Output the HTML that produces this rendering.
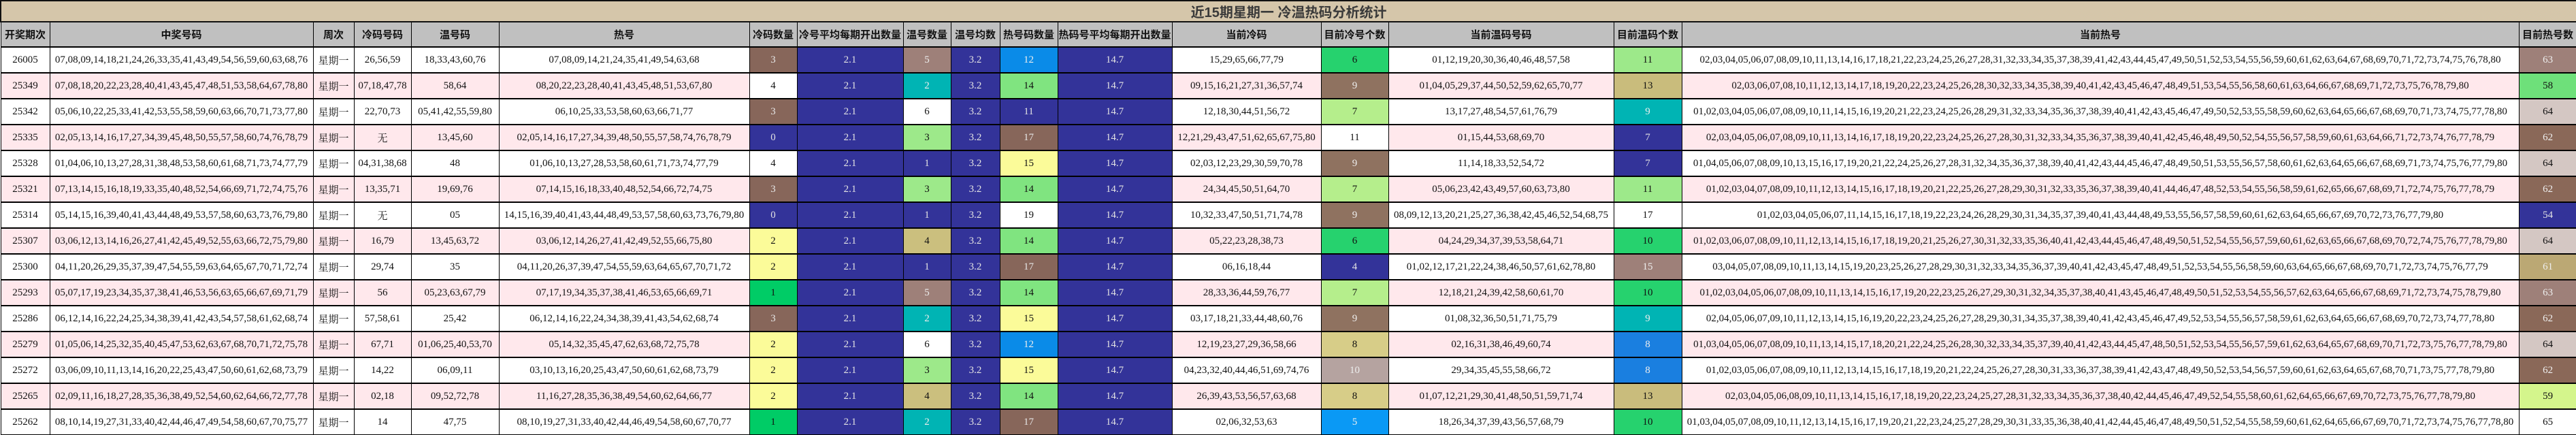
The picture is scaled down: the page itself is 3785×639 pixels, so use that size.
<!DOCTYPE html>
<html><head><meta charset="utf-8">
<style>
html,body{margin:0;padding:0;background:#fff;}
body{width:3785px;height:620px;overflow:hidden;}
table{border-collapse:collapse;table-layout:fixed;width:3785px;font-family:"Liberation Serif","Noto Serif CJK SC","Noto Sans CJK SC",serif;font-size:15px;color:#111;}
td,th{border:1px solid #000;text-align:center;padding:0;white-space:nowrap;overflow:hidden;}
tr.t td{height:26px;background:#d5c6aa;border:2px solid #111;font-family:"Liberation Sans","Noto Sans CJK SC",sans-serif;font-weight:bold;font-size:20px;color:#3a3a3a;}
tr.h th{height:35px;background:#c0c0c0;font-family:"Liberation Sans","Noto Sans CJK SC",sans-serif;font-weight:bold;font-size:15px;color:#111;}
tr.r td{height:36px;border-top:2px solid #000;}
tr.o td{background:#fff;}
tr.e td{background:#ffe8ec;}
tr td.nv{background:#333399;color:#e4e4e4;}
tr td.br{background:#87665a;color:#e6e6e6;}
tr td.gb{background:#9e8079;color:#eee;}
tr td.tl{background:#00b4b4;color:#eee;}
tr td.lg{background:#9de98a;}
tr td.kh{background:#cbbf7e;}
tr td.yl{background:#fbfb99;}
tr td.gr{background:#00cc66;}
tr td.bl{background:#0a8be8;color:#eee;}
tr td.g2{background:#80e480;}
tr td.g3{background:#26d26e;}
tr td.mb{background:#8f7260;color:#eee;}
tr td.l2{background:#b5ee8c;}
tr td.tn{background:#d7cd88;}
tr td.pk{background:#b5a3a0;color:#eee;}
tr td.sb{background:#0a99f5;color:#eee;}
tr td.b8{background:#1a7fe0;color:#eee;}
tr td.k13{background:#c9bc7c;}
tr td.h58{background:#6ee07a;}
tr td.h64{background:#d4c7c3;}
tr td.h62{background:#8a6858;color:#eee;}
tr td.h61{background:#bba874;color:#eee;}
tr td.h59{background:#d4f58c;}
tr td.wh{background:#fff;}
</style></head><body>
<table>
<colgroup>
<col style="width:72px"><col style="width:387px"><col style="width:60px"><col style="width:84px"><col style="width:129px"><col style="width:368px"><col style="width:70px"><col style="width:156px"><col style="width:70px"><col style="width:72px"><col style="width:85px"><col style="width:168px"><col style="width:219px"><col style="width:99px"><col style="width:331px"><col style="width:100px"><col style="width:1230px"><col style="width:85px">
</colgroup>
<tr class="t"><td colspan="18">近15期星期一 冷温热码分析统计</td></tr>
<tr class="h"><th>开奖期次</th><th>中奖号码</th><th>周次</th><th>冷码号码</th><th>温号码</th><th>热号</th><th>冷码数量</th><th>冷号平均每期开出数量</th><th>温号数量</th><th>温号均数</th><th>热号码数量</th><th>热码号平均每期开出数量</th><th>当前冷码</th><th>目前冷号个数</th><th>当前温码号码</th><th>目前温码个数</th><th>当前热号</th><th>目前热号数</th></tr>

<tr class="r o"><td>26005</td><td>07,08,09,14,18,21,24,26,33,35,41,43,49,54,56,59,60,63,68,76</td><td>星期一</td><td>26,56,59</td><td>18,33,43,60,76</td><td>07,08,09,14,21,24,35,41,49,54,63,68</td><td class="br">3</td><td class="nv">2.1</td><td class="gb">5</td><td class="nv">3.2</td><td class="bl">12</td><td class="nv">14.7</td><td>15,29,65,66,77,79</td><td class="g3">6</td><td>01,12,19,20,30,36,40,46,48,57,58</td><td class="lg">11</td><td>02,03,04,05,06,07,08,09,10,11,13,14,16,17,18,21,22,23,24,25,26,27,28,31,32,33,34,35,37,38,39,41,42,43,44,45,47,49,50,51,52,53,54,55,56,59,60,61,62,63,64,67,68,69,70,71,72,73,74,75,76,78,80</td><td class="gb">63</td></tr>

<tr class="r e"><td>25349</td><td>07,08,18,20,22,23,28,40,41,43,45,47,48,51,53,58,64,67,78,80</td><td>星期一</td><td>07,18,47,78</td><td>58,64</td><td>08,20,22,23,28,40,41,43,45,48,51,53,67,80</td><td class="wh">4</td><td class="nv">2.1</td><td class="tl">2</td><td class="nv">3.2</td><td class="g2">14</td><td class="nv">14.7</td><td>09,15,16,21,27,31,36,57,74</td><td class="mb">9</td><td>01,04,05,29,37,44,50,52,59,62,65,70,77</td><td class="k13">13</td><td>02,03,06,07,08,10,11,12,13,14,17,18,19,20,22,23,24,25,26,28,30,32,33,34,35,38,39,40,41,42,43,45,46,47,48,49,51,53,54,55,56,58,60,61,63,64,66,67,68,69,71,72,73,75,76,78,79,80</td><td class="h58">58</td></tr>

<tr class="r o"><td>25342</td><td>05,06,10,22,25,33,41,42,53,55,58,59,60,63,66,70,71,73,77,80</td><td>星期一</td><td>22,70,73</td><td>05,41,42,55,59,80</td><td>06,10,25,33,53,58,60,63,66,71,77</td><td class="br">3</td><td class="nv">2.1</td><td class="wh">6</td><td class="nv">3.2</td><td class="nv">11</td><td class="nv">14.7</td><td>12,18,30,44,51,56,72</td><td class="l2">7</td><td>13,17,27,48,54,57,61,76,79</td><td class="tl">9</td><td>01,02,03,04,05,06,07,08,09,10,11,14,15,16,19,20,21,22,23,24,25,26,28,29,31,32,33,34,35,36,37,38,39,40,41,42,43,45,46,47,49,50,52,53,55,58,59,60,62,63,64,65,66,67,68,69,70,71,73,74,75,77,78,80</td><td class="h64">64</td></tr>

<tr class="r e"><td>25335</td><td>02,05,13,14,16,17,27,34,39,45,48,50,55,57,58,60,74,76,78,79</td><td>星期一</td><td>无</td><td>13,45,60</td><td>02,05,14,16,17,27,34,39,48,50,55,57,58,74,76,78,79</td><td class="nv">0</td><td class="nv">2.1</td><td class="lg">3</td><td class="nv">3.2</td><td class="br">17</td><td class="nv">14.7</td><td>12,21,29,43,47,51,62,65,67,75,80</td><td class="wh">11</td><td>01,15,44,53,68,69,70</td><td class="nv">7</td><td>02,03,04,05,06,07,08,09,10,11,13,14,16,17,18,19,20,22,23,24,25,26,27,28,30,31,32,33,34,35,36,37,38,39,40,41,42,45,46,48,49,50,52,54,55,56,57,58,59,60,61,63,64,66,71,72,73,74,76,77,78,79</td><td class="h62">62</td></tr>

<tr class="r o"><td>25328</td><td>01,04,06,10,13,27,28,31,38,48,53,58,60,61,68,71,73,74,77,79</td><td>星期一</td><td>04,31,38,68</td><td>48</td><td>01,06,10,13,27,28,53,58,60,61,71,73,74,77,79</td><td class="wh">4</td><td class="nv">2.1</td><td class="nv">1</td><td class="nv">3.2</td><td class="yl">15</td><td class="nv">14.7</td><td>02,03,12,23,29,30,59,70,78</td><td class="mb">9</td><td>11,14,18,33,52,54,72</td><td class="nv">7</td><td>01,04,05,06,07,08,09,10,13,15,16,17,19,20,21,22,24,25,26,27,28,31,32,34,35,36,37,38,39,40,41,42,43,44,45,46,47,48,49,50,51,53,55,56,57,58,60,61,62,63,64,65,66,67,68,69,71,73,74,75,76,77,79,80</td><td class="h64">64</td></tr>

<tr class="r e"><td>25321</td><td>07,13,14,15,16,18,19,33,35,40,48,52,54,66,69,71,72,74,75,76</td><td>星期一</td><td>13,35,71</td><td>19,69,76</td><td>07,14,15,16,18,33,40,48,52,54,66,72,74,75</td><td class="br">3</td><td class="nv">2.1</td><td class="lg">3</td><td class="nv">3.2</td><td class="g2">14</td><td class="nv">14.7</td><td>24,34,45,50,51,64,70</td><td class="l2">7</td><td>05,06,23,42,43,49,57,60,63,73,80</td><td class="lg">11</td><td>01,02,03,04,07,08,09,10,11,12,13,14,15,16,17,18,19,20,21,22,25,26,27,28,29,30,31,32,33,35,36,37,38,39,40,41,44,46,47,48,52,53,54,55,56,58,59,61,62,65,66,67,68,69,71,72,74,75,76,77,78,79</td><td class="h62">62</td></tr>

<tr class="r o"><td>25314</td><td>05,14,15,16,39,40,41,43,44,48,49,53,57,58,60,63,73,76,79,80</td><td>星期一</td><td>无</td><td>05</td><td>14,15,16,39,40,41,43,44,48,49,53,57,58,60,63,73,76,79,80</td><td class="nv">0</td><td class="nv">2.1</td><td class="nv">1</td><td class="nv">3.2</td><td class="wh">19</td><td class="nv">14.7</td><td>10,32,33,47,50,51,71,74,78</td><td class="mb">9</td><td>08,09,12,13,20,21,25,27,36,38,42,45,46,52,54,68,75</td><td class="wh">17</td><td>01,02,03,04,05,06,07,11,14,15,16,17,18,19,22,23,24,26,28,29,30,31,34,35,37,39,40,41,43,44,48,49,53,55,56,57,58,59,60,61,62,63,64,65,66,67,69,70,72,73,76,77,79,80</td><td class="nv">54</td></tr>

<tr class="r e"><td>25307</td><td>03,06,12,13,14,16,26,27,41,42,45,49,52,55,63,66,72,75,79,80</td><td>星期一</td><td>16,79</td><td>13,45,63,72</td><td>03,06,12,14,26,27,41,42,49,52,55,66,75,80</td><td class="yl">2</td><td class="nv">2.1</td><td class="kh">4</td><td class="nv">3.2</td><td class="g2">14</td><td class="nv">14.7</td><td>05,22,23,28,38,73</td><td class="g3">6</td><td>04,24,29,34,37,39,53,58,64,71</td><td class="g3">10</td><td>01,02,03,06,07,08,09,10,11,12,13,14,15,16,17,18,19,20,21,25,26,27,30,31,32,33,35,36,40,41,42,43,44,45,46,47,48,49,50,51,52,54,55,56,57,59,60,61,62,63,65,66,67,68,69,70,72,74,75,76,77,78,79,80</td><td class="h64">64</td></tr>

<tr class="r o"><td>25300</td><td>04,11,20,26,29,35,37,39,47,54,55,59,63,64,65,67,70,71,72,74</td><td>星期一</td><td>29,74</td><td>35</td><td>04,11,20,26,37,39,47,54,55,59,63,64,65,67,70,71,72</td><td class="yl">2</td><td class="nv">2.1</td><td class="nv">1</td><td class="nv">3.2</td><td class="br">17</td><td class="nv">14.7</td><td>06,16,18,44</td><td class="nv">4</td><td>01,02,12,17,21,22,24,38,46,50,57,61,62,78,80</td><td class="gb">15</td><td>03,04,05,07,08,09,10,11,13,14,15,19,20,23,25,26,27,28,29,30,31,32,33,34,35,36,37,39,40,41,42,43,45,47,48,49,51,52,53,54,55,56,58,59,60,63,64,65,66,67,68,69,70,71,72,73,74,75,76,77,79</td><td class="h61">61</td></tr>

<tr class="r e"><td>25293</td><td>05,07,17,19,23,34,35,37,38,41,46,53,56,63,65,66,67,69,71,79</td><td>星期一</td><td>56</td><td>05,23,63,67,79</td><td>07,17,19,34,35,37,38,41,46,53,65,66,69,71</td><td class="gr">1</td><td class="nv">2.1</td><td class="gb">5</td><td class="nv">3.2</td><td class="g2">14</td><td class="nv">14.7</td><td>28,33,36,44,59,76,77</td><td class="l2">7</td><td>12,18,21,24,39,42,58,60,61,70</td><td class="g3">10</td><td>01,02,03,04,05,06,07,08,09,10,11,13,14,15,16,17,19,20,22,23,25,26,27,29,30,31,32,34,35,37,38,40,41,43,45,46,47,48,49,50,51,52,53,54,55,56,57,62,63,64,65,66,67,68,69,71,72,73,74,75,78,79,80</td><td class="gb">63</td></tr>

<tr class="r o"><td>25286</td><td>06,12,14,16,22,24,25,34,38,39,41,42,43,54,57,58,61,62,68,74</td><td>星期一</td><td>57,58,61</td><td>25,42</td><td>06,12,14,16,22,24,34,38,39,41,43,54,62,68,74</td><td class="br">3</td><td class="nv">2.1</td><td class="tl">2</td><td class="nv">3.2</td><td class="yl">15</td><td class="nv">14.7</td><td>03,17,18,21,33,44,48,60,76</td><td class="mb">9</td><td>01,08,32,36,50,51,71,75,79</td><td class="tl">9</td><td>02,04,05,06,07,09,10,11,12,13,14,15,16,19,20,22,23,24,25,26,27,28,29,30,31,34,35,37,38,39,40,41,42,43,45,46,47,49,52,53,54,55,56,57,58,59,61,62,63,64,65,66,67,68,69,70,72,73,74,77,78,80</td><td class="h62">62</td></tr>

<tr class="r e"><td>25279</td><td>01,05,06,14,25,32,35,40,45,47,53,62,63,67,68,70,71,72,75,78</td><td>星期一</td><td>67,71</td><td>01,06,25,40,53,70</td><td>05,14,32,35,45,47,62,63,68,72,75,78</td><td class="yl">2</td><td class="nv">2.1</td><td class="wh">6</td><td class="nv">3.2</td><td class="bl">12</td><td class="nv">14.7</td><td>12,19,23,27,29,36,58,66</td><td class="tn">8</td><td>02,16,31,38,46,49,60,74</td><td class="b8">8</td><td>01,03,04,05,06,07,08,09,10,11,13,14,15,17,18,20,21,22,24,25,26,28,30,32,33,34,35,37,39,40,41,42,43,44,45,47,48,50,51,52,53,54,55,56,57,59,61,62,63,64,65,67,68,69,70,71,72,73,75,76,77,78,79,80</td><td class="h64">64</td></tr>

<tr class="r o"><td>25272</td><td>03,06,09,10,11,13,14,16,20,22,25,43,47,50,60,61,62,68,73,79</td><td>星期一</td><td>14,22</td><td>06,09,11</td><td>03,10,13,16,20,25,43,47,50,60,61,62,68,73,79</td><td class="yl">2</td><td class="nv">2.1</td><td class="lg">3</td><td class="nv">3.2</td><td class="yl">15</td><td class="nv">14.7</td><td>04,23,32,40,44,46,51,69,74,76</td><td class="pk">10</td><td>29,34,35,45,55,58,66,72</td><td class="b8">8</td><td>01,02,03,05,06,07,08,09,10,11,12,13,14,15,16,17,18,19,20,21,22,24,25,26,27,28,30,31,33,36,37,38,39,41,42,43,47,48,49,50,52,53,54,56,57,59,60,61,62,63,64,65,67,68,70,71,73,75,77,78,79,80</td><td class="h62">62</td></tr>

<tr class="r e"><td>25265</td><td>02,09,11,16,18,27,28,35,36,38,49,52,54,60,62,64,66,72,77,78</td><td>星期一</td><td>02,18</td><td>09,52,72,78</td><td>11,16,27,28,35,36,38,49,54,60,62,64,66,77</td><td class="yl">2</td><td class="nv">2.1</td><td class="kh">4</td><td class="nv">3.2</td><td class="g2">14</td><td class="nv">14.7</td><td>26,39,43,53,56,57,63,68</td><td class="tn">8</td><td>01,07,12,21,29,30,41,48,50,51,59,71,74</td><td class="k13">13</td><td>02,03,04,05,06,08,09,10,11,13,14,15,16,17,18,19,20,22,23,24,25,27,28,31,32,33,34,35,36,37,38,40,42,44,45,46,47,49,52,54,55,58,60,61,62,64,65,66,67,69,70,72,73,75,76,77,78,79,80</td><td class="h59">59</td></tr>

<tr class="r o"><td>25262</td><td>08,10,14,19,27,31,33,40,42,44,46,47,49,54,58,60,67,70,75,77</td><td>星期一</td><td>14</td><td>47,75</td><td>08,10,19,27,31,33,40,42,44,46,49,54,58,60,67,70,77</td><td class="gr">1</td><td class="nv">2.1</td><td class="tl">2</td><td class="nv">3.2</td><td class="br">17</td><td class="nv">14.7</td><td>02,06,32,53,63</td><td class="sb">5</td><td>18,26,34,37,39,43,56,57,68,79</td><td class="g3">10</td><td>01,03,04,05,07,08,09,10,11,12,13,14,15,16,17,19,20,21,22,23,24,25,27,28,29,30,31,33,35,36,38,40,41,42,44,45,46,47,48,49,50,51,52,54,55,58,59,60,61,62,64,65,66,67,69,70,71,72,73,74,75,76,77,78,80</td><td class="wh">65</td></tr>
</table>
</body></html>
